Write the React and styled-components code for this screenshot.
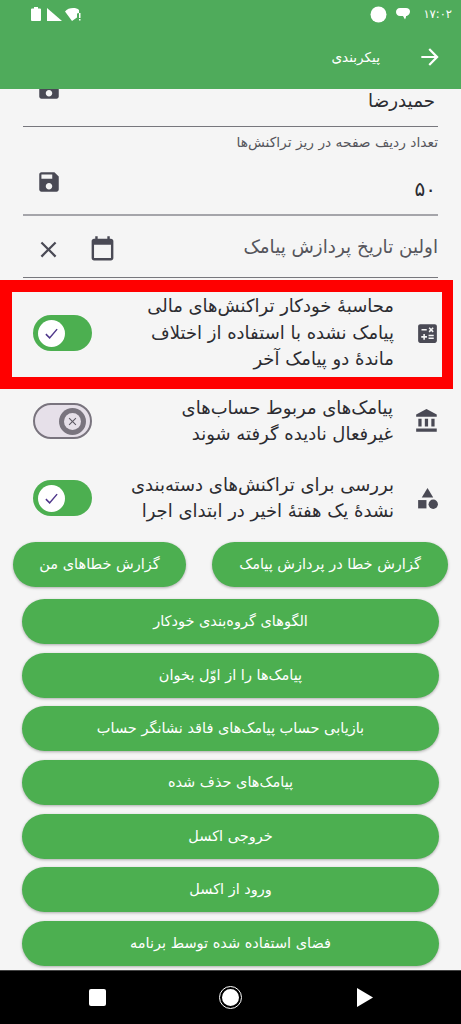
import React from 'react';
import styled, { createGlobalStyle } from 'styled-components';

const GlobalStyle = createGlobalStyle`
    html, body {
        margin: 0;
        padding: 0;
        background: #000;
    }
    * {
        box-sizing: border-box;
    }
`;

const Screen = styled.div`
    width: 461px;
    height: 1024px;
    display: flex;
    flex-direction: column;
    position: relative;
    overflow: hidden;
    font-family: 'DejaVu Sans', sans-serif;
    background: #f5f5f5;
`;

const Header = styled.header`
    height: 89px;
    flex: none;
    background: #4fab5b;
    color: #fff;
    display: flex;
    flex-direction: column;
`;
const StatusBar = styled.div`
    height: 28px;
    padding: 0 9px 0 31px;
    display: flex;
    align-items: center;
    justify-content: space-between;
`;
const StatusGroup = styled.div`
    display: flex;
    align-items: center;
    gap: ${(p) => p.$gap || 0}px;
`;
const Clock = styled.span`
    font-size: 11.5px;
    margin-left: 13px;
`;
const AppBar = styled.div`
    flex: 1;
    display: flex;
    align-items: center;
    justify-content: flex-end;
    padding: 0 18px 3px 0;
    gap: 37px;
    direction: ltr;
`;
const Title = styled.span`
    font-size: 13.6px;
    direction: rtl;
`;

const Content = styled.main`
    flex: 1;
    min-height: 0;
    overflow: hidden;
    display: flex;
    flex-direction: column;
    direction: rtl;
`;

const Field = styled.div`
    margin: 0 23px;
    height: ${(p) => p.$height}px;
    flex: none;
    border-bottom: ${(p) => (p.$thin ? 1 : 2)}px solid ${(p) => p.$line};
    display: flex;
    align-items: center;
    justify-content: space-between;
`;
const FieldText = styled.span`
    font-size: ${(p) => p.$size || 18.3}px;
    color: ${(p) => p.$color || '#2c2c31'};
    margin: ${(p) => p.$margin || 0};
`;
const FieldLabel = styled.div`
    margin: 8px 23px 0;
    height: 15px;
    line-height: 15px;
    font-size: 13.8px;
    color: #55555c;
`;
const FieldIcons = styled.div`
    display: flex;
    align-items: center;
    direction: rtl;
    margin-top: 5px;
`;
const SaveIcon = styled.svg`
    width: 26px;
    height: 26px;
    fill: #4a4a55;
    margin-left: 13px;
    margin-top: ${(p) => p.$top}px;
`;

const Row = styled.div`
    height: ${(p) => p.$height}px;
    flex: none;
    display: flex;
    align-items: center;
    padding: ${(p) => p.$pad || '0 21px 0 33px'};
`;
const RowText = styled.div`
    flex: 1;
    font-size: 18px;
    line-height: 26.5px;
    color: #2c2c31;
    padding-right: 21px;
    white-space: nowrap;
`;
const Track = styled.div`
    width: 59px;
    height: 36px;
    flex: none;
    border-radius: 18px;
    display: flex;
    align-items: center;
    direction: ltr;
    justify-content: ${(p) => (p.$on ? 'flex-start' : 'flex-end')};
    padding: 0 4px;
    background: ${(p) => (p.$on ? '#4caf50' : '#e6e0e9')};
    border: ${(p) => (p.$on ? 'none' : '2px solid #79747e')};
`;
const Knob = styled.div`
    width: 27px;
    height: 27px;
    border-radius: 50%;
    margin-left: ${(p) => (p.$on ? 1 : 0)}px;
    background: ${(p) => (p.$on ? '#fff' : '#79747e')};
    display: flex;
    align-items: center;
    justify-content: center;
`;
const KnobInner = styled.div`
    width: 17px;
    height: 17px;
    border-radius: 50%;
    background: #e6e0e9;
    display: flex;
    align-items: center;
    justify-content: center;
`;

const Highlight = styled.div`
    position: absolute;
    left: 0;
    top: 280px;
    width: 453px;
    height: 109px;
    border: solid #ff0000;
    border-width: 12px 11px 12px 12px;
    pointer-events: none;
`;

const ButtonRow = styled.div`
    display: flex;
    justify-content: space-between;
    padding: 0 13px;
    margin-top: 14px;
    flex: none;
`;
const Button = styled.button`
    width: ${(p) => p.$width || 'auto'};
    height: 45px;
    flex: none;
    border: none;
    border-radius: 22.5px;
    background: #4caf50;
    color: #fff;
    font-family: inherit;
    font-size: 14.5px;
    direction: rtl;
    padding: 0 0 1px;
    box-shadow: 0 1px 3px rgba(0, 0, 0, 0.3);
`;
const ButtonList = styled.div`
    display: flex;
    flex-direction: column;
    gap: 8.67px;
    padding: 12px 22px 0;
    flex: none;
`;

const NavBar = styled.nav`
    height: 54px;
    flex: none;
    background: #000;
    border-top: 1px solid #444;
    display: flex;
    align-items: center;
    justify-content: center;
    direction: ltr;
`;
const NavSquare = styled.div`
    width: 17px;
    height: 17px;
    background: #fff;
    border-radius: 2px;
`;
const NavCircle = styled.div`
    width: 21px;
    height: 21px;
    margin: 0 116px 0 114px;
    border-radius: 50%;
    background: #fff;
    border: 2px solid #000;
    outline: 1px solid #fff;
`;

const Icon = ({ d, size = 24, color = '#4a4a55', children, style }) => (
    <svg width={size} height={size} viewBox='0 0 24 24' fill={color} style={style}>
        {d && <path d={d} />}
        {children}
    </svg>
);

const SAVE =
    'M17 3H5c-1.11 0-2 .9-2 2v14c0 1.1.89 2 2 2h14c1.1 0 2-.9 2-2V7l-4-4zm-5 16c-1.66 0-3-1.34-3-3s1.34-3 3-3 3 1.34 3 3-1.34 3-3 3zm3-10H5V5h10v4z';
const CALENDAR =
    'M19 3h-1V1h-2v2H8V1H6v2H5c-1.11 0-2 .9-2 2v14c0 1.1.89 2 2 2h14c1.1 0 2-.9 2-2V5c0-1.1-.9-2-2-2zm0 16H5V8h14v11z';
const CLOSE =
    'M19 6.41L17.59 5 12 10.59 6.41 5 5 6.41 10.59 12 5 17.59 6.41 19 12 13.41 17.59 19 19 17.59 13.41 12z';
const CALCULATE =
    'M19 3H5c-1.1 0-2 .9-2 2v14c0 1.1.9 2 2 2h14c1.1 0 2-.9 2-2V5c0-1.1-.9-2-2-2zm-5.97 4.06L14.09 6l1.41 1.41L16.91 6l1.06 1.06-1.41 1.41 1.41 1.41-1.06 1.06-1.41-1.4-1.41 1.41-1.06-1.06 1.41-1.41-1.41-1.42zm-6.78.66h5v1.5h-5v-1.5zM11.5 16h-2v2H8v-2H6v-1.5h2v-2h1.5v2h2V16zm6.5 1.25h-5v-1.5h5v1.5zm0-2.5h-5v-1.5h5v1.5z';
const BANK =
    'M4 10v7h3v-7H4zm6 0v7h3v-7h-3zM2 22h19v-3H2v3zm14-12v7h3v-7h-3zm-4.5-9L2 6v2h19V6l-9.5-5z';
const ARROW = 'M12 4l-1.41 1.41L16.17 11H4v2h12.17l-5.58 5.59L12 20l8-8z';

const Toggle = ({ on }) => (
    <Track $on={on}>
        <Knob $on={on}>
            {on ? (
                <svg width='15' height='15' viewBox='0 0 24 24' fill='none' stroke='#4f378b' strokeWidth='2.4'>
                    <path d='M3 13l6 6L21 5' />
                </svg>
            ) : (
                <KnobInner>
                    <Icon d={CLOSE} size={13} color='#5c5863' />
                </KnobInner>
            )}
        </Knob>
    </Track>
);

const buttons = [
    'الگوهای گروه‌بندی خودکار',
    'پیامک‌ها را از اوّل بخوان',
    'بازیابی حساب پیامک‌های فاقد نشانگر حساب',
    'پیامک‌های حذف شده',
    'خروجی اکسل',
    'ورود از اکسل',
    'فضای استفاده شده توسط برنامه',
];

const App = () => (
    <Screen>
        <GlobalStyle />
        <Header>
            <StatusBar>
                <StatusGroup $gap={6}>
                    <svg width='10' height='14' viewBox='0 0 10 14' fill='#fff'>
                        <path d='M3 0h4v1.5h2a1 1 0 0 1 1 1V13a1 1 0 0 1-1 1H1a1 1 0 0 1-1-1V2.500a1 1 0 0 1 1-1h2z' />
                    </svg>
                    <svg width='15' height='13' viewBox='0 0 15 13' fill='#fff'>
                        <path d='M0 0l15 13H0z' />
                    </svg>
                    <svg width='17' height='13' viewBox='0 0 17 13' fill='#fff' style={{ marginLeft: -3 }}>
                        <path d='M0 3.500C3-.5 11-1 14 2v3l-2 .500v4L7 13z' />
                        <path d='M14 5h1.500v5H14zM14 11h1.500v1.500H14z' />
                    </svg>
                </StatusGroup>
                <StatusGroup>
                    <svg width='17' height='17' viewBox='0 0 17 17' fill='#fff'>
                        <circle cx='8.5' cy='8.5' r='8' />
                    </svg>
                    <svg width='14' height='13' viewBox='0 0 14 13' fill='#fff' style={{ marginLeft: 9 }}>
                        <path d='M4 0h6c2.500 0 4 1.500 4 3.500S12.500 8 10 8v1l-1 2.500L7 8H4C1.500 8 0 6 0 4s1.500-4 4-4z' />
                    </svg>
                    <Clock>۱۷:۰۲</Clock>
                </StatusGroup>
            </StatusBar>
            <AppBar>
                <Title>پیکربندی</Title>
                <Icon d={ARROW} size={26} color='#fff' />
            </AppBar>
        </Header>
        <Content>
            <Field $height={38} $line='#77777d' $thin>
                <FieldText $margin='-15px 3px 0 0'>حمیدرضا</FieldText>
                <SaveIcon viewBox='0 0 24 24' $top={-37}>
                    <path d={SAVE} />
                </SaveIcon>
            </Field>
            <FieldLabel>تعداد ردیف صفحه در ریز تراکنش‌ها</FieldLabel>
            <Field $height={66} $line='#a5a5aa'>
                <FieldText $size={20} $margin='13px 2px 0 0'>۵۰</FieldText>
                <SaveIcon viewBox='0 0 24 24' $top={0}>
                    <path d={SAVE} />
                </SaveIcon>
            </Field>
            <Field $height={62} $line='#77777d' $thin>
                <FieldText $color='#55555c'>اولین تاریخ پردازش پیامک</FieldText>
                <FieldIcons>
                    <Icon d={CALENDAR} size={29} style={{ marginLeft: 26 }} />
                    <Icon d={CLOSE} size={27} style={{ marginLeft: 12 }} />
                </FieldIcons>
            </Field>
            <Row $height={110}>
                <Icon d={CALCULATE} size={25} />
                <RowText>
                    محاسبهٔ خودکار تراکنش‌های مالی
                    <br />
                    پیامک نشده با استفاده از اختلاف
                    <br />
                    ماندهٔ دو پیامک آخر
                </RowText>
                <Toggle on />
            </Row>
            <Row $height={64} $pad='2px 21px 0 33px'>
                <Icon d={BANK} size={26} />
                <RowText>
                    پیامک‌های مربوط حساب‌های
                    <br />
                    غیرفعال نادیده گرفته شوند
                </RowText>
                <Toggle />
            </Row>
            <Row $height={76} $pad='16px 21px 0 33px'>
                <Icon size={25}>
                    <path d='M12 2l-5.500 9h11z' />
                    <circle cx='17.500' cy='17.500' r='4.500' />
                    <path d='M3 13.500h8v8H3z' />
                </Icon>
                <RowText>
                    بررسی برای تراکنش‌های دسته‌بندی
                    <br />
                    نشدهٔ یک هفتهٔ اخیر در ابتدای اجرا
                </RowText>
                <Toggle on />
            </Row>
            <ButtonRow>
                <Button $width='236px'>گزارش خطا در پردازش پیامک</Button>
                <Button $width='173px'>گزارش خطاهای من</Button>
            </ButtonRow>
            <ButtonList>
                {buttons.map((label) => (
                    <Button key={label}>{label}</Button>
                ))}
            </ButtonList>
        </Content>
        <NavBar>
            <NavSquare />
            <NavCircle />
            <svg width='16' height='19' viewBox='0 0 16 19' fill='#fff'>
                <path d='M0 0l16 9.500L0 19z' />
            </svg>
        </NavBar>
        <Highlight />
    </Screen>
);

export default App;
